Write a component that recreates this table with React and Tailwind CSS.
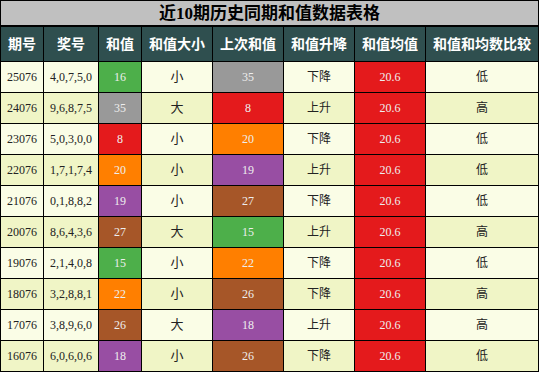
import React from "react";

const C = {
  green: "bg-[#4daf4a]",
  gray: "bg-[#999999]",
  red: "bg-[#e41a1c]",
  orange: "bg-[#ff7f00]",
  purple: "bg-[#984ea3]",
  brown: "bg-[#a65628]",
};

const rows = [
  ["25076", "4,0,7,5,0", "16", "green", "小", "35", "gray", "下降", "低"],
  ["24076", "9,6,8,7,5", "35", "gray", "大", "8", "red", "上升", "高"],
  ["23076", "5,0,3,0,0", "8", "red", "小", "20", "orange", "下降", "低"],
  ["22076", "1,7,1,7,4", "20", "orange", "小", "19", "purple", "上升", "低"],
  ["21076", "0,1,8,8,2", "19", "purple", "小", "27", "brown", "下降", "低"],
  ["20076", "8,6,4,3,6", "27", "brown", "大", "15", "green", "上升", "高"],
  ["19076", "2,1,4,0,8", "15", "green", "小", "22", "orange", "下降", "低"],
  ["18076", "3,2,8,8,1", "22", "orange", "小", "26", "brown", "下降", "高"],
  ["17076", "3,8,9,6,0", "26", "brown", "大", "18", "purple", "上升", "高"],
  ["16076", "6,0,6,0,6", "18", "purple", "小", "26", "brown", "下降", "低"],
];

const headers = ["期号", "奖号", "和值", "和值大小", "上次和值", "和值升降", "和值均值", "和值和均数比较"];

export default function App() {
  return (
    <div
      className="w-[539px] h-[372px] bg-black p-px grid grid-cols-[42px_54px_42px_70px_70px_70px_70px_112px] grid-rows-[25px_34px_repeat(10,30px)] gap-px"
      style={{ fontFamily: '"Liberation Serif", "Noto Sans CJK SC", serif' }}
    >
      <div className="col-span-8 bg-[#c0c0c0] border-b border-black flex items-center justify-center text-[17px] font-bold text-black leading-none">
        近10期历史同期和值数据表格
      </div>
      {headers.map((h) => (
        <div
          key={h}
          className="bg-[#2f4f4f] text-white font-bold text-[14px] flex items-center justify-center whitespace-nowrap"
        >
          {h}
        </div>
      ))}
      {rows.map((r, i) => {
        const bg = i % 2 === 0 ? "bg-[#fafde6]" : "bg-[#f0f5c6]";
        const cell = `${bg} flex items-center justify-center text-[12px] text-[#222222]`;
        const col = "flex items-center justify-center text-[12px] text-[#eeeeee]";
        return (
          <React.Fragment key={r[0]}>
            <div className={cell}>{r[0]}</div>
            <div className={cell}>{r[1]}</div>
            <div className={`${col} ${C[r[3]]}`}>{r[2]}</div>
            <div className={`${cell} text-[13px]`}>{r[4]}</div>
            <div className={`${col} ${C[r[6]]}`}>{r[5]}</div>
            <div className={cell}>{r[7]}</div>
            <div className={`${col} ${C.red}`}>20.6</div>
            <div className={cell}>{r[8]}</div>
          </React.Fragment>
        );
      })}
    </div>
  );
}
